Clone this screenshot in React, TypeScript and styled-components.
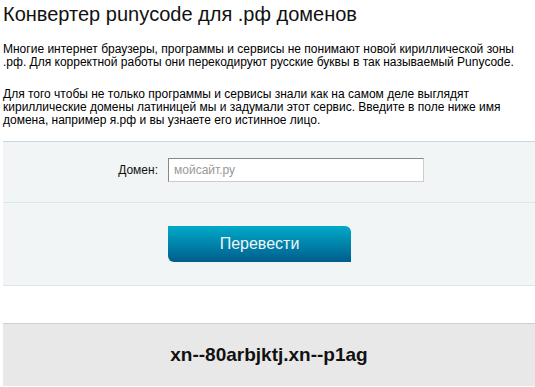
import React from 'react'
import styled, { createGlobalStyle } from 'styled-components'

const GlobalStyle = createGlobalStyle`
  html, body {
    margin: 0;
    padding: 0;
    background: #fff;
  }
  body {
    font-family: "Liberation Sans", Arial, sans-serif;
    color: #000;
  }
`

const Page = styled.div`
  padding: 3px 0 0 3px;
`

const Title = styled.h1`
  margin: 0 0 18px;
  font-size: 20px;
  line-height: 22px;
  font-weight: normal;
  color: #111;
`

const Text = styled.p`
  margin: 0 0 19px;
  font-size: 12px;
  line-height: 13px;
  &:last-of-type {
    margin-bottom: 14px;
  }
`

const Form = styled.form`
  background: #f1f5f6;
  border-top: 1px solid #c6d8df;
  border-bottom: 1px solid #dbe7e9;
`

const Row = styled.div<{ $tall?: boolean; $last?: boolean }>`
  display: grid;
  grid-template-columns: 155px 256px;
  column-gap: 10px;
  align-items: center;
  padding: ${p => (p.$tall ? '23px 0' : '16px 0 20px')};
  border-bottom: ${p => (p.$last ? 'none' : '1px solid #dbe7e9')};
`

const Label = styled.label`
  text-align: right;
  font-size: 12px;
  color: #111;
`

const Input = styled.input`
  box-sizing: border-box;
  width: 256px;
  height: 24px;
  padding: 0 5px;
  border: 1px solid #ccc;
  border-top-color: #888;
  border-left-color: #888;
  background: #fff;
  font-family: inherit;
  font-size: 12px;
  outline: none;
  &::placeholder {
    color: #999;
  }
`

const Button = styled.button`
  box-sizing: border-box;
  width: 183px;
  height: 36px;
  border: none;
  border-radius: 0 6px 0 6px;
  background: linear-gradient(to bottom, #00aac9, #005d8c);
  color: #eef6f9;
  font-family: inherit;
  font-size: 16px;
  cursor: pointer;
`

const Result = styled.div`
  margin-top: 37px;
  height: 62px;
  border-top: 1px solid #cfcfcf;
  background: #e8e8e8;
  display: flex;
  align-items: center;
  justify-content: center;
  font-size: 19px;
  font-weight: bold;
  color: #111;
`

export default function App() {
  return (
    <Page>
      <GlobalStyle />
      <Title>Конвертер punycode для .рф доменов</Title>
      <Text>
        Многие интернет браузеры, программы и сервисы не понимают новой кириллической зоны
        .рф. Для корректной работы они перекодируют русские буквы в так называемый Punycode.
      </Text>
      <Text>
        Для того чтобы не только программы и сервисы знали как на самом деле выглядят
        кириллические домены латиницей мы и задумали этот сервис. Введите в поле ниже имя
        домена, например я.рф и вы узнаете его истинное лицо.
      </Text>
      <Form onSubmit={e => e.preventDefault()}>
        <Row>
          <Label htmlFor="domain">Домен:</Label>
          <Input id="domain" placeholder="мойсайт.ру" />
        </Row>
        <Row $tall $last>
          <span />
          <Button type="submit">Перевести</Button>
        </Row>
      </Form>
      <Result>xn--80arbjktj.xn--p1ag</Result>
    </Page>
  )
}
